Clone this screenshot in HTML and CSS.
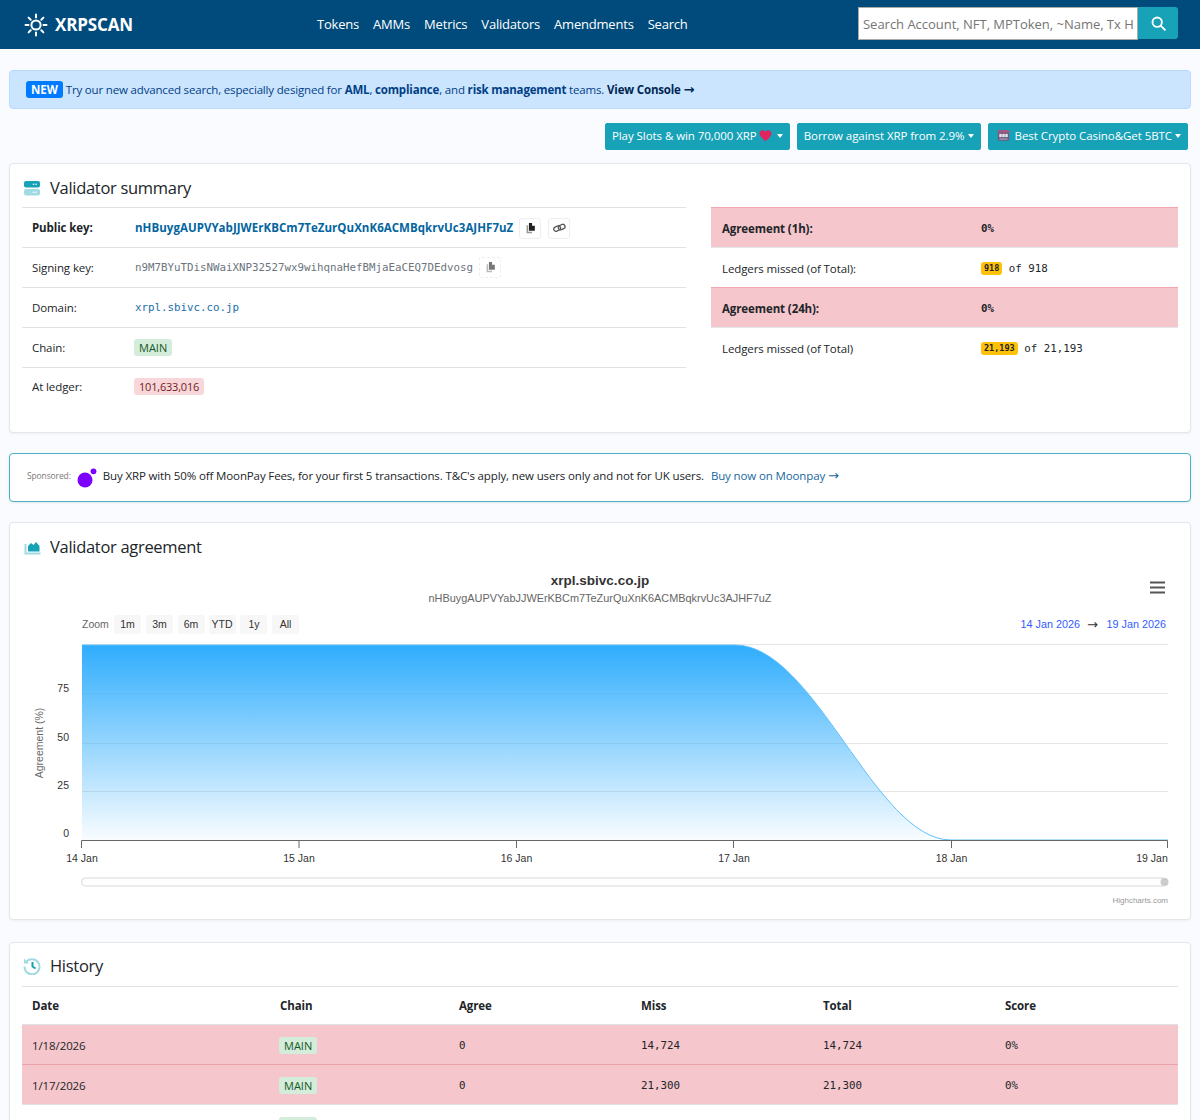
FILE: index.html
```html
<!DOCTYPE html>
<html lang="en">
<head>
<meta charset="utf-8">
<title>XRPSCAN</title>
<link rel="stylesheet" href="styles.css">
</head>
<body>
<header class="nav">
  <a class="brand">
    <svg class="brand-icon" viewBox="0 0 24 24" width="24" height="24" fill="none" stroke="#fff" stroke-width="2" stroke-linecap="round"><circle cx="12" cy="12" r="4.6"/><path d="M12 1.5v3M12 19.5v3M1.5 12h3M19.5 12h3M4.6 4.6l2.1 2.1M17.3 17.3l2.1 2.1M4.6 19.4l2.1-2.1M17.3 6.7l2.1-2.1"/></svg>
    <span>XRPSCAN</span>
  </a>
  <nav class="links"><a>Tokens</a><a>AMMs</a><a>Metrics</a><a>Validators</a><a>Amendments</a><a>Search</a></nav>
  <form class="search">
    <input class="search-input" placeholder="Search Account, NFT, MPToken, ~Name, Tx Hash">
    <button class="search-btn" type="button"><svg viewBox="0 0 16 16" width="15" height="15" fill="none" stroke="#fff" stroke-width="2" stroke-linecap="round"><circle cx="6.6" cy="6.6" r="5"/><path d="M10.6 10.6l4.2 4.2"/></svg></button>
  </form>
</header>
<main class="main">
  <div class="alert"><span class="new">NEW</span> Try our new advanced search, especially designed for <b>AML</b>, <b>compliance</b>, and <b>risk management</b> teams. <b class="console">View Console <span class="arrow">→</span></b></div>
  <div class="ads">
    <button class="ad" type="button">Play Slots &amp; win 70,000 XRP<svg viewBox="0 0 16 16" width="13" height="13" class="emoji heart"><path fill="#e0245e" d="M8 15C3 11 .7 8.400.7 5.300.7 3 2.500 1.400 4.500 1.400c1.500 0 2.800.8 3.500 2.100.7-1.300 2-2.100 3.500-2.100 2 0 3.800 1.600 3.800 3.900C15.300 8.400 13 11 8 15z"/></svg><i class="caret"></i></button>
    <button class="ad" type="button">Borrow against XRP from 2.9%<i class="caret"></i></button>
    <button class="ad" type="button"><svg viewBox="0 0 16 16" width="13" height="13" class="emoji slot"><rect x="1" y="1.500" width="14" height="13" rx="1.500" fill="#6d5a7e"/><rect x="1" y="1.500" width="14" height="3" fill="#a8577e"/><rect x="2.800" y="6" width="3" height="4" fill="#e8e4ee"/><rect x="6.500" y="6" width="3" height="4" fill="#e8e4ee"/><rect x="10.200" y="6" width="3" height="4" fill="#e8e4ee"/><rect x="3" y="11.500" width="10" height="2" fill="#9a8fa8"/></svg>Best Crypto Casino&amp;Get 5BTC<i class="caret"></i></button>
  </div>

  <section class="card summary">
    <h2 class="title"><svg viewBox="0 0 18 18" width="18" height="18"><rect x="1" y="2" width="16" height="6.500" rx="2" fill="#17a2b8"/><rect x="1" y="10" width="16" height="6.500" rx="2" fill="#a2dae3"/><circle cx="13" cy="5.200" r=".8" fill="#fff"/><circle cx="10.500" cy="5.200" r=".8" fill="#fff"/><circle cx="13" cy="13.200" r=".8" fill="#fff"/><circle cx="10.500" cy="13.200" r=".8" fill="#fff"/></svg>Validator summary</h2>
    <div class="summary-cols">
      <div class="kv">
        <div class="kv-row kv-first"><b class="kv-k">Public key:</b><div class="kv-v"><b class="link">nHBuygAUPVYabJJWErKBCm7TeZurQuXnK6ACMBqkrvUc3AJHF7uZ</b><span class="icon-btn"><svg viewBox="0 0 14 14" width="11" height="11"><path fill="#222" d="M5 0h4v3.500h3.500V10H5z"/><path fill="#999" d="M2 3h2v8h5v2H2z"/></svg></span><span class="icon-btn"><svg viewBox="0 0 16 14" width="13" height="12" fill="none" stroke="#555" stroke-width="1.600"><rect x="1" y="5" width="8.500" height="5.500" rx="2.700" transform="rotate(-25 5 8)"/><rect x="6.500" y="3" width="8.500" height="5.500" rx="2.700" transform="rotate(-25 11 6)"/></svg></span></div></div>
        <div class="kv-row"><span class="kv-k">Signing key:</span><div class="kv-v"><span class="mono muted">n9M7BYuTDisNWaiXNP32527wx9wihqnaHefBMjaEaCEQ7DEdvosg</span><span class="icon-btn dashed"><svg viewBox="0 0 14 14" width="11" height="11"><path fill="#777" d="M5 0h4v3.500h3.500V10H5z"/><path fill="#bbb" d="M2 3h2v8h5v2H2z"/></svg></span></div></div>
        <div class="kv-row"><span class="kv-k">Domain:</span><div class="kv-v"><span class="mono domain">xrpl.sbivc.co.jp</span></div></div>
        <div class="kv-row"><span class="kv-k">Chain:</span><div class="kv-v"><span class="tag green">MAIN</span></div></div>
        <div class="kv-row kv-last"><span class="kv-k">At ledger:</span><div class="kv-v"><span class="tag red">101,633,016</span></div></div>
      </div>
      <div class="agree">
        <div class="ag-row danger"><b class="ag-k">Agreement (1h):</b><b class="mono ag-v">0%</b></div>
        <div class="ag-row"><span class="ag-k">Ledgers missed (of Total):</span><span class="mono ag-v"><span class="pill">918</span> of 918</span></div>
        <div class="ag-row danger"><b class="ag-k">Agreement (24h):</b><b class="mono ag-v">0%</b></div>
        <div class="ag-row"><span class="ag-k">Ledgers missed (of Total)</span><span class="mono ag-v"><span class="pill">21,193</span> of 21,193</span></div>
      </div>
    </div>
  </section>

  <section class="sponsor">
    <span class="sp-label">Sponsored:</span>
    <svg class="sp-logo" viewBox="0 0 20 20" width="20" height="20"><circle cx="8" cy="12" r="7.500" fill="#7d00ff"/><circle cx="16.500" cy="3.300" r="2.900" fill="#7d00ff"/></svg>
    <span>Buy XRP with 50% off MoonPay Fees, for your first 5 transactions. T&amp;C's apply, new users only and not for UK users.</span>
    <a class="sp-link">Buy now on Moonpay <span class="arrow">→</span></a>
  </section>

  <section class="card chart-card">
    <h2 class="title"><svg viewBox="0 0 18 18" width="18" height="18"><path d="M2.500 6v9.500H17.500" fill="none" stroke="#a2dae3" stroke-width="2"/><path d="M5 13.500V8l3-3 2.500 2 2.500-3 3.500 4v5.500z" fill="#17a2b8"/></svg>Validator agreement</h2>
    <svg class="chart" viewBox="0 0 1156 352" width="1156" height="352">
      <defs><linearGradient id="g" x1="0" y1="0" x2="0" y2="1"><stop offset="0" stop-color="#2fadfd"/><stop offset="1" stop-color="#2fadfd" stop-opacity=".03"/></linearGradient></defs>
      <g transform="translate(-22,-568)">
        <text x="600" y="585" class="c-title">xrpl.sbivc.co.jp</text>
        <text x="600" y="602" class="c-sub">nHBuygAUPVYabJJWErKBCm7TeZurQuXnK6ACMBqkrvUc3AJHF7uZ</text>
        <path d="M1150 582.500h15M1150 587.500h15M1150 592.500h15" stroke="#555" stroke-width="2.200"/>
        <text x="82" y="628" class="c-label">Zoom</text>
        <g class="c-btn">
          <rect x="114" y="615" width="27" height="19" rx="2"/><rect x="146" y="615" width="27" height="19" rx="2"/><rect x="178" y="615" width="27" height="19" rx="2"/><rect x="209" y="615" width="27" height="19" rx="2"/><rect x="240" y="615" width="27" height="19" rx="2"/><rect x="272" y="615" width="27" height="19" rx="2"/>
        </g>
        <g class="c-btn-t"><text x="127.500" y="628">1m</text><text x="159.500" y="628">3m</text><text x="191" y="628">6m</text><text x="222" y="628">YTD</text><text x="254" y="628">1y</text><text x="285.500" y="628">All</text></g>
        <text x="1080" y="628" class="c-date end">14 Jan 2026</text>
        <text x="1087" y="629" class="c-arrow">→</text>
        <text x="1166" y="628" class="c-date end">19 Jan 2026</text>
        <g class="c-grid"><path d="M82 644.500H1168M82 693.500H1168M82 743.500H1168M82 791.500H1168"/></g>
        <path d="M82 645H735C815 645 875 840 951 840H82z" fill="url(#g)"/>
        <path d="M82 645H735C815 645 875 840 951 840H1168" fill="none" stroke="#62c1fb" stroke-width="1"/>
        <g class="c-ytick"><text x="69" y="692">75</text><text x="69" y="741">50</text><text x="69" y="789">25</text><text x="69" y="837">0</text></g>
        <text class="c-ytitle" transform="translate(43,743) rotate(-90)">Agreement (%)</text>
        <path d="M81.500 848V840.500H1167.500V848M299 840v8M516.500 840v8M733.500 840v8M951.500 840v8" fill="none" stroke="#666"/>
        <g class="c-xtick"><text x="82" y="862">14 Jan</text><text x="299" y="862">15 Jan</text><text x="516.500" y="862">16 Jan</text><text x="734" y="862">17 Jan</text><text x="951.500" y="862">18 Jan</text><text x="1152" y="862">19 Jan</text></g>
        <rect x="81.500" y="878" width="1086" height="8" rx="4" fill="#fff" stroke="#d8d8d8"/>
        <circle cx="1164.500" cy="882" r="4" fill="#ccc"/>
        <text x="1168" y="903" class="c-credit">Highcharts.com</text>
      </g>
    </svg>
  </section>

  <section class="card history">
    <h2 class="title"><svg viewBox="0 0 18 18" width="18" height="18" fill="none"><path d="M3.200 5A7.500 7.500 0 1 1 1.500 9.500" stroke="#a2dae3" stroke-width="2"/><path d="M1 1.500v5h5z" fill="#a2dae3"/><path d="M9.500 5v4.500l3 2" stroke="#17a2b8" stroke-width="2"/></svg>History</h2>
    <div class="h-row h-head"><b>Date</b><b>Chain</b><b>Agree</b><b>Miss</b><b>Total</b><b>Score</b></div>
    <div class="h-row danger"><span>1/18/2026</span><span><span class="tag green">MAIN</span></span><span class="mono">0</span><span class="mono">14,724</span><span class="mono">14,724</span><span class="mono">0%</span></div>
    <div class="h-row danger"><span>1/17/2026</span><span><span class="tag green">MAIN</span></span><span class="mono">0</span><span class="mono">21,300</span><span class="mono">21,300</span><span class="mono">0%</span></div>
    <div class="h-row"><span>1/16/2026</span><span><span class="tag green">MAIN</span></span><span class="mono">21,600</span><span class="mono">0</span><span class="mono">21,600</span><span class="mono">100%</span></div>
  </section>
</main>
</body>
</html>
```

FILE: styles.css
```css
* { box-sizing: border-box; }
html, body { margin: 0; padding: 0; }
body {
  background: #f9fbff;
  color: #212529;
  font-family: "Open Sans", "Noto Sans", sans-serif;
  font-size: 11.500px;
  letter-spacing: -.1px;
  line-height: 18px;
  height: 1120px;
  overflow: hidden;
}
.mono { font-family: "DejaVu Sans Mono", monospace; font-size: 10.800px; letter-spacing: 0; }
.arrow { font-family: "DejaVu Sans", sans-serif; font-size: 13px; letter-spacing: 0; line-height: 1; }
.nav {
  background: #004b7c;
  height: 49px;
  display: flex;
  align-items: center;
  padding: 0 22px 0 24px;
  color: #fff;
}
.brand { display: flex; align-items: center; gap: 7px; font-size: 17px; font-weight: 700; width: 293px; letter-spacing: -.15px; }
.brand span { padding-top: 1px; }
.links { display: flex; gap: 14px; font-size: 13px; flex: 1; letter-spacing: -.2px; padding-bottom: 2px; }
.search { display: flex; align-items: flex-start; margin-bottom: 2px; }
.search-input {
  width: 280px; height: 33px; border: 1px solid #aaa; background: #fff; padding: 0 4px;
  font: 13px "Open Sans", sans-serif; outline: none; letter-spacing: -.02px;
}
.search-input::placeholder { color: #757575; }
.search-btn {
  width: 40px; height: 32px; background: #17a2b8; border: 0; border-radius: 0 3px 3px 0;
  display: flex; align-items: center; justify-content: center; padding: 0;
}
.main { padding: 21px 9px 0; }
.alert {
  height: 39px; background: #cce5ff; border: 1px solid #b8daff; border-radius: 4px;
  color: #004085; padding: 0 16px; display: block; line-height: 37px; font-size: 11.500px; letter-spacing: -.17px;
}
.alert b { font-weight: 700; }
.alert .console { color: #002752; }
.new { background: #007bff; color: #fff; font-weight: 700; font-size: 11.500px; border-radius: 3px; padding: 1px 5px; letter-spacing: 0; }
.ads { display: flex; justify-content: flex-end; gap: 7px; margin-top: 14px; padding-right: 3px; height: 27px; }
.ad {
  background: #17a2b8; color: #fff; border: 1px solid #17a2b8; border-radius: 2px; padding: 0 6px 2px 6px;
  font: 11.500px "Open Sans", sans-serif; display: flex; align-items: center; letter-spacing: -.06px;
}
.emoji { flex: none; }
.heart { margin: 0 2px 0 2px; }
.slot { margin: 0 5px 0 2px; }
.caret { display: inline-block; margin-left: 3px; border-top: 4px solid #fff; border-left: 3px solid transparent; border-right: 3px solid transparent; }
.card {
  background: #fff; border: 1px solid #e3e6ea; border-radius: 4px; box-shadow: 0 1px 3px rgba(0,0,0,.05);
  padding: 0 12px;
}
.title {
  display: flex; align-items: center; gap: 9px; margin: 0; height: 43px; padding: 4px 0 0 1px;
  font-size: 16.500px; font-weight: 400; color: #212529; letter-spacing: -.3px;
}
.history .title { padding-top: 2px; }
.summary { margin-top: 13px; height: 270px; }
.summary-cols { display: grid; grid-template-columns: 664px 467px; gap: 25px; }
.kv-row { display: flex; align-items: center; height: 40px; border-top: 1px solid #dee2e6; padding-left: 10px; }
.kv-first { padding-top: 1px; }
.kv-k { width: 103px; flex: none; }
.kv-last .kv-v { margin-bottom: 2px; }
.kv-last .kv-k { margin-bottom: 2px; }
.kv-v { display: flex; align-items: center; gap: 6px; }
.link { color: #04659f; letter-spacing: .04px; }
.muted { color: #6c757d; }
.domain { color: #1b6ea8; }
.icon-btn { display: inline-flex; align-items: center; justify-content: center; width: 22px; height: 21px; border: 1px solid #eee; border-radius: 3px; background: #fff; }
.icon-btn + .icon-btn { margin-left: 1px; }
.dashed { border-style: dashed; }
.tag { display: inline-block; padding: 0 5px; border-radius: 3px; font-size: 11px; line-height: 17px; letter-spacing: -.2px; margin-left: -1px; }
.green { background: #d4edda; color: #155724; letter-spacing: 0; }
.red { background: #f8d7da; color: #721c24; }
.ag-row { display: flex; align-items: center; height: 40px; padding: 2px 0 0 11px; border-top: 1px solid #e3e6ea; }
.ag-k { width: 259px; flex: none; }
.danger { background: #f5c6cb; }
.ag-row.danger { border-top: 1px solid #f1a5ae; }
.pill { display: inline-block; background: #ffc107; border-radius: 3px; font-size: 8.500px; font-weight: 700; line-height: 13px; padding: 0 3px; vertical-align: 1px; }
.sponsor {
  margin-top: 20px; height: 49px; background: #fff; border: 1px solid #48b0c0; border-radius: 4px;
  display: flex; align-items: center; padding: 0 0 3px 17px; gap: 6px; font-size: 11.500px; letter-spacing: -.13px;
  box-shadow: 0 1px 3px rgba(0,0,0,.08);
}
.sp-label { font-size: 8.500px; color: #777; }
.sp-logo { margin-top: 4px; }
.sp-link { color: #17689e; margin-left: 1px; }
.chart-card { margin-top: 20px; height: 398px; }
.chart { display: block; margin-top: 2px; }
.chart text { font-family: "Liberation Sans", Arial, sans-serif; letter-spacing: 0; }
.chart .c-title { font-size: 13.500px; font-weight: 700; fill: #333; text-anchor: middle; }
.chart .c-sub { font-size: 10.900px; fill: #666; text-anchor: middle; }
.chart .c-label { font-size: 10.500px; fill: #666; }
.c-btn rect { fill: #f7f7f7; }
.c-btn-t text { font-size: 10.500px; fill: #333; text-anchor: middle; }
.chart .c-date { font-size: 10.800px; fill: #335cff; }
.chart .end { text-anchor: end; }
.chart .c-arrow { font-family: "DejaVu Sans", sans-serif; font-size: 13px; fill: #333; }
.c-grid path { stroke: #e6e6e6; fill: none; }
.c-ytick text { font-size: 10.500px; fill: #333; text-anchor: end; }
.chart .c-ytitle { font-size: 10.500px; fill: #666; text-anchor: middle; }
.c-xtick text { font-size: 10.500px; fill: #333; text-anchor: middle; }
.chart .c-credit { font-size: 8px; fill: #999; text-anchor: end; }
.history { margin-top: 22px; }
.h-row {
  display: grid; grid-template-columns: 248px 179px 182px 182px 182px 1fr; align-items: center;
  height: 40px; border-top: 1px solid #dee2e6;
}
.h-row > * { padding-left: 10px; }
.h-row > span { padding-top: 2px; }
.h-row .tag { vertical-align: top; }
.h-head { height: 38px; }
.h-row.danger { border-top-color: #eba1a8; }
.h-head + .h-row.danger { border-top-color: #dee2e6; }
```
